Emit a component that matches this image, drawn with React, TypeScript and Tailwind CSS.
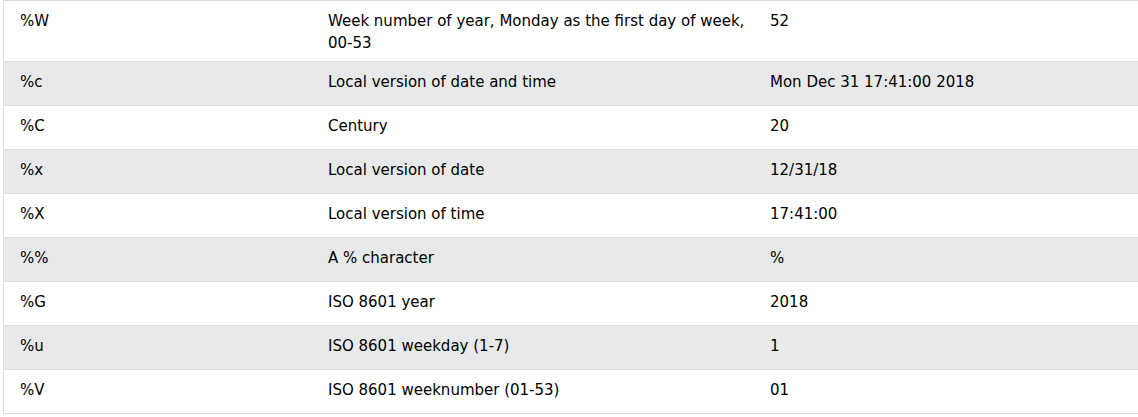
const rows: [string, string, string][] = [
  ['%W', 'Week number of year, Monday as the first day of week, 00-53', '52'],
  ['%c', 'Local version of date and time', 'Mon Dec 31 17:41:00 2018'],
  ['%C', 'Century', '20'],
  ['%x', 'Local version of date', '12/31/18'],
  ['%X', 'Local version of time', '17:41:00'],
  ['%%', 'A % character', '%'],
  ['%G', 'ISO 8601 year', '2018'],
  ['%u', 'ISO 8601 weekday (1-7)', '1'],
  ['%V', 'ISO 8601 weeknumber (01-53)', '01'],
];

export default function App() {
  return (
    <div className="w-[1138px] h-[417px] overflow-hidden bg-white pl-[3px] font-['Verdana','DejaVu_Sans',sans-serif] text-[15px] leading-[22px] text-black">
      <div className="w-[1160px] border-l border-t border-[#dddddd]">
        {rows.map(([fmt, desc, example], idx) => (
          <div
            key={fmt}
            className={`grid grid-cols-[316px_442px_1fr] border-b border-[#dddddd] ${
              idx === 0 ? 'h-[61px]' : 'h-[44px]'
            } ${idx % 2 === 1 ? 'bg-[#e7e9eb]' : 'bg-white'}`}
          >
            <div className="pl-4 pr-2 pt-[9px]">{fmt}</div>
            <div className="px-2 pt-[9px]">{desc}</div>
            <div className="px-2 pt-[9px]">{example}</div>
          </div>
        ))}
      </div>
    </div>
  );
}
